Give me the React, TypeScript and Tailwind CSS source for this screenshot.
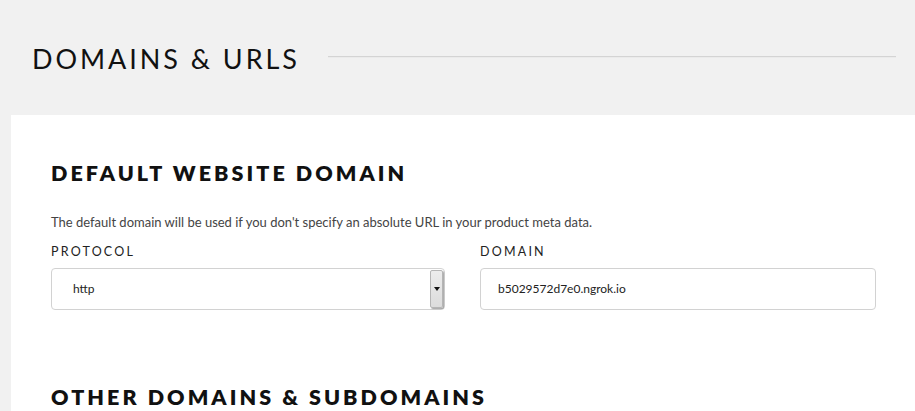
import React from "react";

export default function App() {
  const font = { fontFamily: "Lato, 'Open Sans', sans-serif" };
  return (
    <div className="w-[915px] h-[411px] overflow-hidden bg-[#f1f1f1]" style={font}>
      <div className="h-[115px] flex items-start pt-[41px] pl-[32px] pr-[19px]">
        <h1 className="text-[27px] leading-[36px] font-normal tracking-[2.95px] text-[#111] whitespace-nowrap">
          DOMAINS &amp; URLS
        </h1>
        <div className="flex-1 ml-[28px] mt-[15px] border-t border-[#d4d4d4] border-b-[1px] border-b-[#ebebeb] h-[2px]" />
      </div>
      <div className="ml-[11px] bg-white h-[296px] pl-[40px] pr-[39px] pt-[45px]">
        <h2 className="text-[21.5px] leading-[26px] font-extrabold tracking-[3.05px] text-[#111] whitespace-nowrap">
          DEFAULT WEBSITE DOMAIN
        </h2>
        <p className="mt-[28px] text-[13px] leading-[16px] text-[#444] whitespace-nowrap">
          The default domain will be used if you don't specify an absolute URL in your product meta data.
        </p>
        <div className="mt-[14px] flex gap-[35px]">
          <div className="w-[394px]">
            <div className="text-[12.5px] leading-[16px] tracking-[2.2px] text-[#222]">PROTOCOL</div>
            <div className="mt-[8px] h-[42px] border border-[#d2d2d2] rounded-[4px] flex items-center pl-[21px] pr-[1px] bg-white">
              <span className="flex-1 text-[12px] text-[#222]">http</span>
              <div className="w-[13px] h-[38px] bg-gradient-to-b from-[#ececec] to-[#dcdcdc] border border-[#b5b5b5] rounded-[2px] flex items-center justify-center shadow-[1px_1px_1px_rgba(0,0,0,0.35)]">
                <svg width="6" height="4" viewBox="0 0 6 4"><path d="M0 0h6L3 4z" fill="#111" /></svg>
              </div>
            </div>
          </div>
          <div className="w-[396px]">
            <div className="text-[12.5px] leading-[16px] tracking-[2.2px] text-[#222]">DOMAIN</div>
            <div className="mt-[8px] h-[42px] border border-[#d2d2d2] rounded-[4px] flex items-center pl-[17px] bg-white">
              <span className="text-[12px] text-[#222]">b5029572d7e0.ngrok.io</span>
            </div>
          </div>
        </div>
        <h2 className="mt-[74px] text-[21.5px] leading-[26px] font-extrabold tracking-[3.05px] text-[#111] whitespace-nowrap">
          OTHER DOMAINS &amp; SUBDOMAINS
        </h2>
      </div>
    </div>
  );
}
